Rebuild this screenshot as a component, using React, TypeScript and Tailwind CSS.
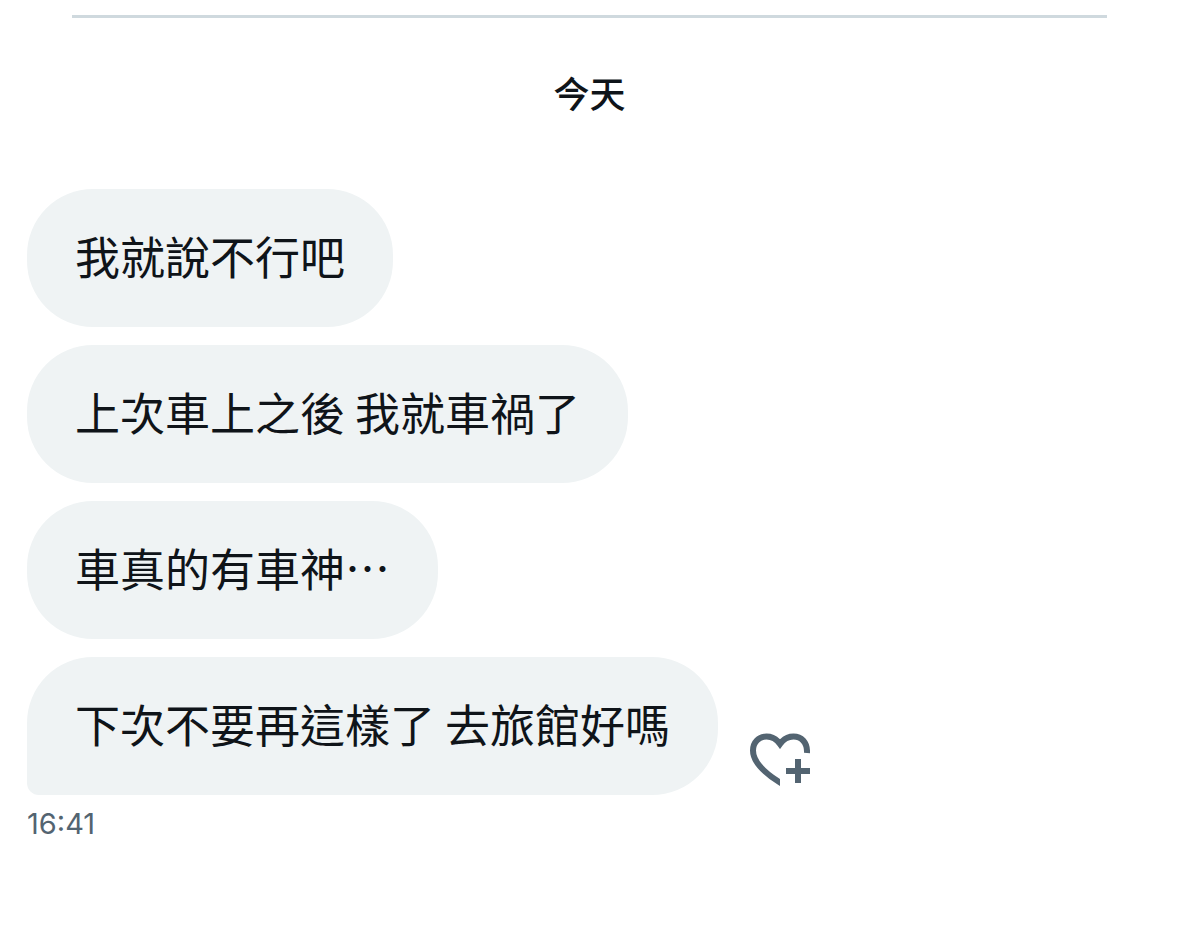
type Message = {
  id: number;
  text: string;
};

const messages: Message[] = [
  { id: 1, text: '我就說不行吧' },
  { id: 2, text: '上次車上之後 我就車禍了' },
  { id: 3, text: '車真的有車神…' },
  { id: 4, text: '下次不要再這樣了 去旅館好嗎' },
];

const HeartPlusIcon = () => (
  <svg width="60" height="54" viewBox="0 0 60 54" fill="none" stroke="currentColor" strokeWidth="6" aria-hidden="true">
    <defs>
      <clipPath id="heart-left">
        <rect x="0" y="0" width="30" height="54" />
      </clipPath>
      <clipPath id="heart-right">
        <rect x="30" y="0" width="30" height="54" />
      </clipPath>
    </defs>
    <path
      clipPath="url(#heart-left)"
      d="M33 7 L30 11 C26.5 6 22 3.5 16.5 3.5 C9 3.5 3 9 3 17.5 C3 28 14 39.5 30 49.5 L36 53.3"
    />
    <path clipPath="url(#heart-right)" d="M27 7 L30 11 C33.5 6 38 3.5 43.5 3.5 C51 3.5 57.5 9 57 20" />
    <path d="M48 26 V50 M36 38 H60" />
  </svg>
);

// The last bubble of a group gets the tail corner and the reaction button
const MessageRow = ({ message, isLast }: { message: Message; isLast: boolean }) => (
  <li className="flex items-end gap-8">
    <p
      className={`rounded-[66px] bg-[#eff3f4] px-12 pt-[34px] pb-[38px] text-[45px] leading-[66px] ${
        isLast ? 'rounded-bl-xl' : ''
      }`}
    >
      {message.text}
    </p>
    {isLast && (
      <button type="button" aria-label="新增回應" className="mb-2 shrink-0 text-[#536471]">
        <HeartPlusIcon />
      </button>
    )}
  </li>
);

function App() {
  return (
    <main
      lang="zh-Hant"
      className="min-h-screen bg-white pt-[15px] pb-20 font-['Noto_Sans_CJK_TC',sans-serif] text-[#0f1419]"
    >
      <hr className="mx-[72px] border-t-[3px] border-[#cfd9de]" />
      <h2 className="mt-12 text-center text-[36px] leading-[52px] font-medium">今天</h2>

      <section className="mt-[71px] px-[27px]">
        <ul className="flex flex-col gap-[18px]">
          {messages.map((message, index) => (
            <MessageRow key={message.id} message={message} isLast={index === messages.length - 1} />
          ))}
        </ul>
        <time className="mt-[11px] block font-[Inter,sans-serif] text-[29px] leading-9 text-[#536471]">16:41</time>
      </section>
    </main>
  );
}

export default App;
